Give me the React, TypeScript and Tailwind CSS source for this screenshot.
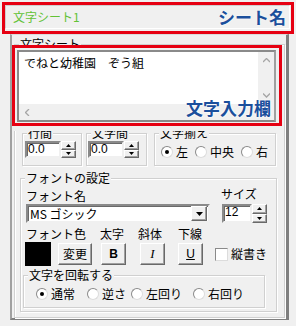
const raised =
  "bg-[#f0f0f0] border border-t-white border-l-white border-r-[#696969] border-b-[#696969] shadow-[inset_-1px_-1px_0_#a0a0a0]";
const sunken =
  "bg-white border-2 border-t-[#8a8a8a] border-l-[#8a8a8a] border-r-[#f0f0f0] border-b-[#f0f0f0] shadow-[inset_1px_1px_0_#696969]";

function Group({ label, className, children }: { label: string; className: string; children?: React.ReactNode }) {
  return (
    <div className={"relative border border-[#d0d0d0] shadow-[inset_1px_1px_0_#fff,1px_1px_0_#fff] " + className}>
      <span className="absolute left-[4px] top-[-8px] bg-[#f0f0f0] px-[1px] leading-[14px] whitespace-nowrap">{label}</span>
      {children}
    </div>
  );
}

function Radio({ checked, label, className }: { checked?: boolean; label: string; className: string }) {
  return (
    <div className={"flex items-center gap-[3px] " + className}>
      <span className="flex h-[12px] w-[12px] shrink-0 items-center justify-center rounded-full border border-t-[#8a8a8a] border-l-[#8a8a8a] border-r-[#dcdcdc] border-b-[#dcdcdc] bg-white">
        {checked && <span className="h-[4px] w-[4px] rounded-full bg-black" />}
      </span>
      <span className="leading-[14px] whitespace-nowrap">{label}</span>
    </div>
  );
}

function Arrow({ up }: { up?: boolean }) {
  return (
    <svg width="5" height="3" viewBox="0 0 5 3">
      <polygon points={up ? "2.5,0 5,3 0,3" : "0,0 5,0 2.5,3"} fill="#000" />
    </svg>
  );
}

function SpinButtons() {
  return (
    <div className="flex h-full w-[15px] flex-col">
      <div className={"flex flex-1 items-center justify-center " + raised}>
        <Arrow up />
      </div>
      <div className={"flex flex-1 items-center justify-center " + raised}>
        <Arrow />
      </div>
    </div>
  );
}

function SpinBox({ value, className }: { value: string; className: string }) {
  return (
    <div className={"flex " + className}>
      <div className={"flex-1 pl-[1px] font-['Liberation_Sans',sans-serif] text-[12px] leading-[13px] " + sunken}>{value}</div>
      <SpinButtons />
    </div>
  );
}

function Chevron({ dir }: { dir: "up" | "down" | "left" }) {
  const pts = dir === "up" ? "0,4 3.5,0.5 7,4" : dir === "down" ? "0,0.5 3.5,4 7,0.5" : "4,0 0.5,3.5 4,7";
  return (
    <svg width={dir === "left" ? 5 : 7} height={dir === "left" ? 7 : 5} viewBox={dir === "left" ? "0 0 5 7" : "0 0 7 5"}>
      <polyline points={pts} fill="none" stroke="#a6a6a6" strokeWidth="1.3" />
    </svg>
  );
}

export default function App() {
  return (
    <div className="h-[326px] w-[296px] overflow-hidden bg-[#f0f0f0] pt-[2px] font-['Noto_Sans_CJK_JP',sans-serif] text-[12px] text-black">
      {/* sheet name */}
      <div className="ml-[2px] h-[32px] w-[292px] border-[3px] border-[#e60012]">
        <div className="flex h-[24px] w-[285px] items-center justify-between border border-[#cfcfcf] border-r-white border-b-white pl-[7px] pr-[3px]">
          <span className="text-[12px] leading-[14px] text-[#62c236]">文字シート1</span>
          <span className="text-[17px] font-bold leading-[20px] text-[#1b4f9c] [text-shadow:0_0_2px_#fff]">シート名</span>
        </div>
      </div>

      {/* tab page */}
      <div className="ml-[10px] h-[286px] w-[279px] border-t border-l-2 border-r-[3px] border-b-2 border-t-[#dcdcdc] border-l-[#a0a0a0] border-r-[#7f7f7f] border-b-[#7f7f7f]">
        <Group label="文字シート" className="ml-[2px] mt-[9px] h-[274px] w-[271px]">
          <div className="relative z-10 -ml-[3px] h-[81px] w-[270px] border-[3px] border-[#e60012] bg-[#f0f0f0] shadow-[0_5px_0_#f0f0f0]">
            <div className="ml-[2px] mt-[2px] flex h-[72px] w-[259px] flex-col border-2 border-[#8a8a8a] border-r-[#a0a0a0] bg-white">
              <div className="flex flex-1">
                <div className="flex-1 pl-[5px] pt-[4px] leading-[14px]">でねと幼稚園　ぞう組</div>
                <div className="flex w-[16px] flex-col items-center justify-between bg-[#f0f0f0] py-[6px]">
                  <Chevron dir="up" />
                  <Chevron dir="down" />
                </div>
              </div>
              <div className="flex h-[16px] items-center bg-[#f0f0f0] pl-[6px]">
                <Chevron dir="left" />
              </div>
            </div>
            <span className="absolute right-[8px] bottom-[5px] text-[17px] font-bold leading-[20px] text-[#1b4f9c] [text-shadow:0_0_2px_#fff,0_0_2px_#fff]">
              文字入力欄
            </span>
          </div>

          <div className="ml-[7px] mt-[7px] flex items-start">
            <Group label="行間" className="h-[33px] w-[60px]">
              <SpinBox value="0.0" className="ml-[2px] mt-[7px] h-[17px] w-[51px]" />
            </Group>
            <Group label="文字間" className="ml-[4px] h-[33px] w-[61px]">
              <SpinBox value="0.0" className="ml-[1px] mt-[7px] h-[17px] w-[51px]" />
            </Group>
            <Group label="文字揃え" className="ml-[7px] h-[33px] w-[122px]">
              <div className="ml-[6px] mt-[11px] flex h-[14px] items-center">
                <Radio checked label="左" className="w-[34px]" />
                <Radio label="中央" className="w-[46px]" />
                <Radio label="右" className="" />
              </div>
            </Group>
          </div>

          <Group label="フォントの設定" className="ml-[5px] mt-[12px] h-[134px] w-[257px]">
            <div className="mt-[10px] flex leading-[14px]">
              <span className="ml-[5px] w-[195px]">フォント名</span>
              <span className="-mt-[2px]">サイズ</span>
            </div>
            <div className="mt-[1px] flex">
              <div className={"ml-[5px] flex h-[19px] w-[184px] items-center justify-between pr-[1px] " + sunken}>
                <span className="pl-[2px] leading-[14px]">MS ゴシック</span>
                <div className={"flex h-[15px] w-[16px] items-center justify-center " + raised}>
                  <svg width="7" height="4" viewBox="0 0 7 4">
                    <polygon points="0,0 7,0 3.5,4" fill="#000" />
                  </svg>
                </div>
              </div>
              <SpinBox value="12" className="ml-[12px] h-[19px] w-[45px]" />
            </div>
            <div className="mt-[4px] flex leading-[14px]">
              <span className="ml-[5px] w-[74px]">フォント色</span>
              <span className="w-[38px]">太字</span>
              <span className="w-[40px]">斜体</span>
              <span>下線</span>
            </div>
            <div className="mt-[1px] flex h-[24px] items-center">
              <div className="ml-[4px] h-[24px] w-[26px] bg-black" />
              <div className={"ml-[7px] flex h-[22px] w-[34px] items-center justify-center leading-[14px] " + raised}>変更</div>
              <div className={"ml-[9px] flex h-[22px] w-[25px] items-center justify-center font-['Liberation_Sans',sans-serif] text-[12px] font-bold " + raised}>B</div>
              <div className={"ml-[14px] flex h-[22px] w-[25px] items-center justify-center font-['Liberation_Serif',serif] text-[13px] italic " + raised}>I</div>
              <div className={"ml-[13px] flex h-[22px] w-[25px] items-center justify-center font-['Liberation_Sans',sans-serif] text-[12px] underline " + raised}>U</div>
              <div className="ml-[12px] h-[13px] w-[13px] border border-t-[#8a8a8a] border-l-[#8a8a8a] border-r-[#dcdcdc] border-b-[#dcdcdc] bg-white" />
              <span className="ml-[3px] leading-[14px]">縦書き</span>
            </div>
            <Group label="文字を回転する" className="ml-[2px] mt-[9px] h-[33px] w-[242px]">
              <div className="mt-[11px] flex h-[14px] items-center">
                <Radio checked label="通常" className="ml-[12px] w-[51px]" />
                <Radio label="逆さ" className="w-[44px]" />
                <Radio label="左回り" className="w-[62px]" />
                <Radio label="右回り" className="" />
              </div>
            </Group>
          </Group>
        </Group>
      </div>
    </div>
  );
}
